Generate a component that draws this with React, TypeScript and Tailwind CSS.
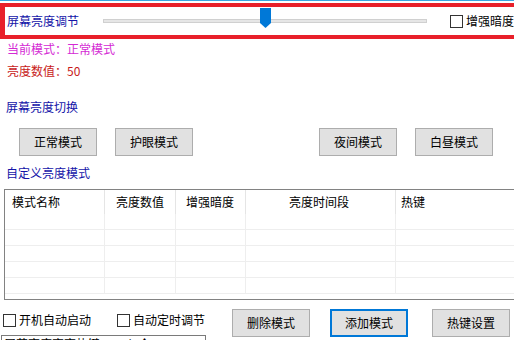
import React from 'react';

const font = "font-['Noto_Sans_CJK_SC',sans-serif]";

const Btn = ({ label, focused = false, className = '' }: { label: string; focused?: boolean; className?: string }) => (
  <div
    className={`flex h-[28px] w-[78px] items-center justify-center bg-[#e1e1e1] text-[12px] text-black ${
      focused ? 'border-2 border-[#0078d7]' : 'border border-[#adadad]'
    } ${className}`}
  >
    {label}
  </div>
);

const Check = ({ label, className = '' }: { label: string; className?: string }) => (
  <div className={`flex items-center text-[12px] text-black ${className}`}>
    <span className="mr-[3px] h-[13px] w-[13px] border border-[#333]" />
    <span>{label}</span>
  </div>
);

const cols = [
  { name: '模式名称', w: 'w-[100px]', pad: 'pl-[7px]' },
  { name: '亮度数值', w: 'w-[71px]', pad: 'pl-[11px]' },
  { name: '增强暗度', w: 'w-[70px]', pad: 'pl-[10px]' },
  { name: '亮度时间段', w: 'w-[150px]', pad: 'pl-[43px]' },
  { name: '热键', w: 'w-[130px]', pad: 'pl-[5px]' },
];

export default function App() {
  return (
    <div className={`h-[340px] w-[514px] overflow-hidden bg-white ${font}`}>
      <div className="h-[1px] bg-[#3aa6e0]" />
      {/* 顶部亮度滑块 */}
      <div className="relative mt-[2px] flex h-[36px] w-[530px] items-center border-y-[4px] border-l-[5px] border-[#e8202a] bg-white">
        <span className="ml-[2px] w-[96px] text-[12px] text-[#1414a8]">屏幕亮度调节</span>
        <div className="h-[4px] w-[324px] border border-[#d0d0d0] bg-[#e6e6e6]" />
        <svg className="absolute left-[255px] top-[1px]" width="11" height="20" viewBox="0 0 11 20">
          <path d="M0 0H11V15L5.5 20L0 15Z" fill="#0078d7" />
        </svg>
        <Check label="增强暗度" className="ml-[23px]" />
      </div>

      <div className="ml-[7px] mt-[2px] h-[16px] text-[12px] leading-[16px] text-[#d42ad4]">当前模式：正常模式</div>
      <div className="ml-[7px] mt-[6px] h-[16px] text-[12px] leading-[16px] text-[#c81a1a]">亮度数值：50</div>
      <div className="ml-[6px] mt-[20px] h-[16px] text-[12px] leading-[16px] text-[#1414a8]">屏幕亮度切换</div>

      <div className="mt-[13px] flex">
        <Btn label="正常模式" className="ml-[19px]" />
        <Btn label="护眼模式" className="ml-[18px]" />
        <Btn label="夜间模式" className="ml-[126px]" />
        <Btn label="白昼模式" className="ml-[18px]" />
      </div>

      <div className="ml-[6px] mt-[9px] h-[16px] text-[12px] leading-[16px] text-[#1414a8]">自定义亮度模式</div>

      {/* 模式列表 */}
      <div className="ml-[4px] mt-[8px] h-[111px] w-[530px] overflow-hidden border-y border-l border-[#828282]">
        <div className="flex h-[24px]">
          {cols.map((c, i) => (
            <div
              key={c.name}
              className={`${c.w} ${c.pad} flex h-full items-center text-[12px] text-black ${
                i < cols.length - 1 ? 'border-r border-[#e5e5e5]' : ''
              }`}
            >
              {c.name}
            </div>
          ))}
        </div>
        {[0, 1, 2, 3, 4].map((r) => (
          <div key={r} className="flex h-[16px] border-b border-[#eeeeee]">
            {cols.map((c, i) => (
              <div key={c.name} className={`${c.w} h-full ${i < cols.length - 1 ? 'border-r border-[#eeeeee]' : ''}`} />
            ))}
          </div>
        ))}
      </div>

      <div className="flex">
        <div className="w-[230px]">
          <div className="ml-[3px] mt-[12px] flex h-[16px]">
            <Check label="开机自动启动" />
            <Check label="自动定时调节" className="ml-[26px]" />
          </div>
          <div className="ml-[1px] mt-[7px] h-[20px] w-[205px] border border-[#7a7a7a] pl-[2px] text-[12px] leading-[16px] text-black">
            屏幕亮度变亮热键：Ctrl+↑
          </div>
        </div>
        <div className="mt-[9px] flex">
          <Btn label="删除模式" className="ml-[2px]" />
          <Btn label="添加模式" focused className="ml-[20px]" />
          <Btn label="热键设置" className="ml-[24px] w-[76px]" />
        </div>
      </div>
    </div>
  );
}
